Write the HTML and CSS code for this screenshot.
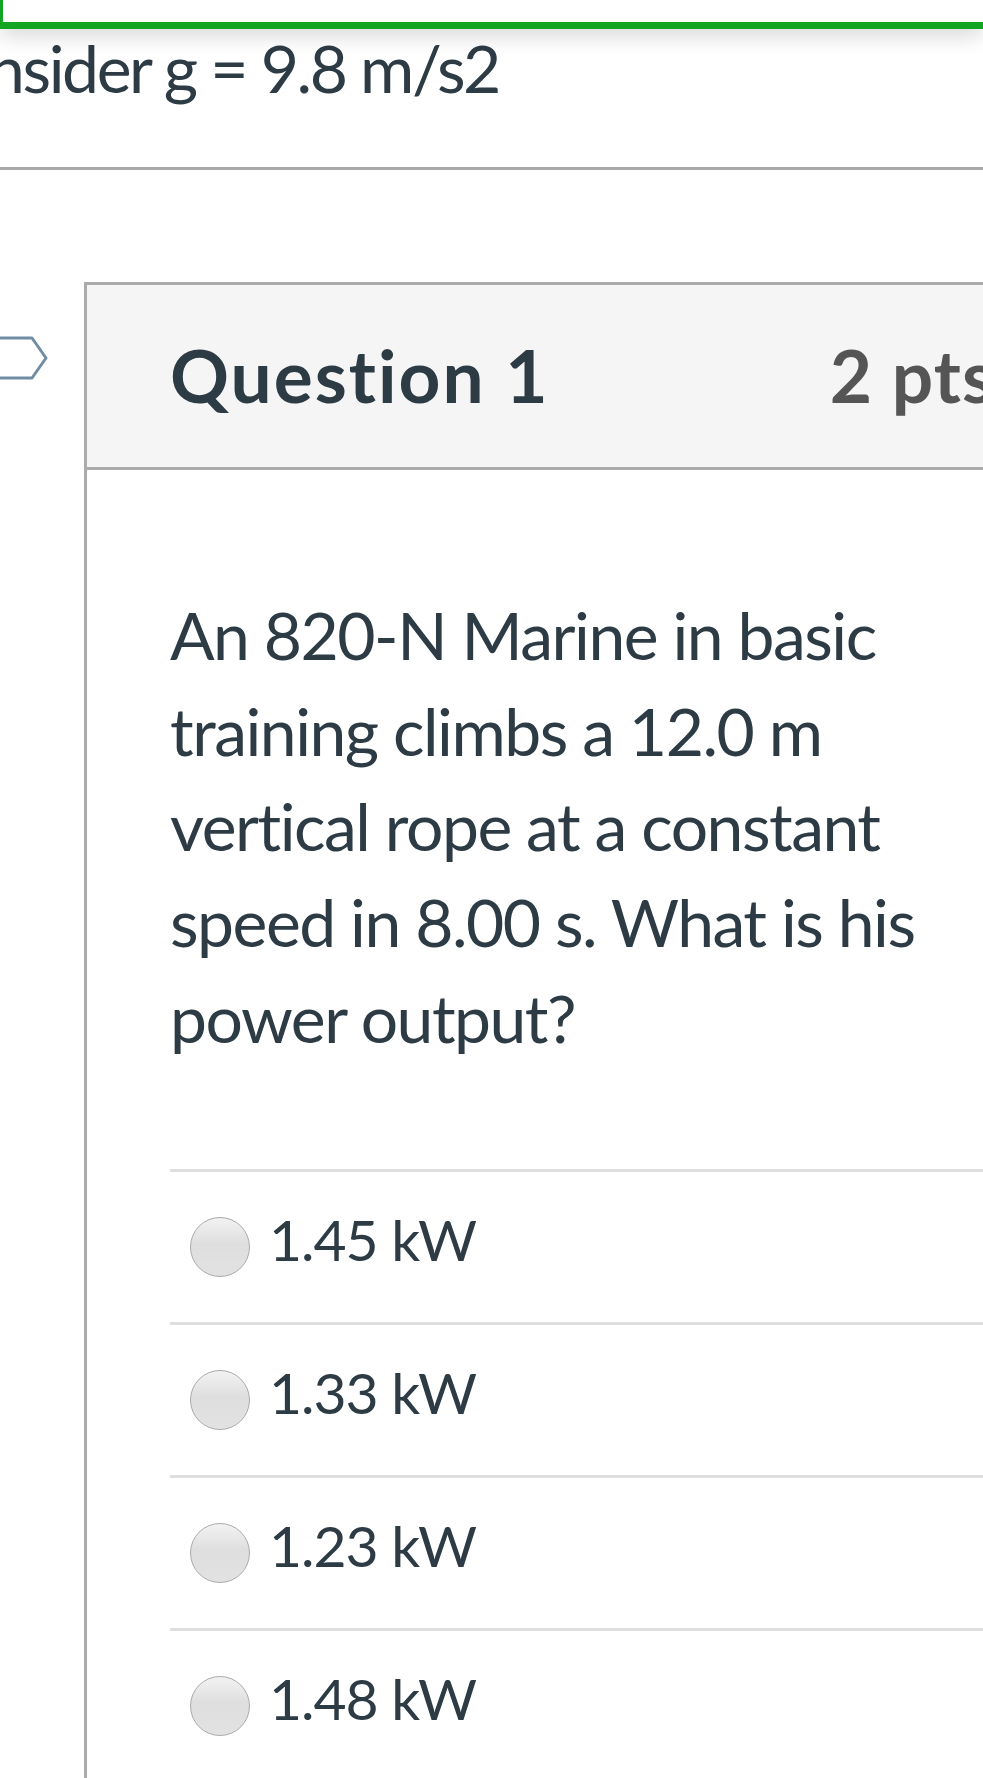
FILE: index.html
```html
<!DOCTYPE html>
<html lang="en">
<head>
<meta charset="utf-8">
<title>Quiz</title>
<link rel="stylesheet" href="styles.css">
</head>
<body>
<div class="page">
  <div class="top-box"></div>
  <p class="desc">Consider g = 9.8 m/s2</p>
  <div class="rule"></div>

  <div class="question-wrap">
    <svg class="flag" width="56" height="48" viewBox="0 0 56 48" aria-hidden="true">
      <path d="M-4 4 H32 L46 24 L32 44 H-4" fill="none" stroke="#6f8ea6" stroke-width="3" stroke-linejoin="round"/>
    </svg>
    <div class="question">
      <div class="q-header">
        <h2 class="q-title">Question 1</h2>
        <span class="q-pts">2 pts</span>
      </div>
      <div class="q-body">
        <p class="q-text">An 820-N Marine in basic training climbs a 12.0 m vertical rope at a constant speed in 8.00 s. What is his power output?</p>
        <div class="answers">
          <label class="answer"><span class="radio"></span><span class="answer-text">1.45 kW</span></label>
          <label class="answer"><span class="radio"></span><span class="answer-text">1.33 kW</span></label>
          <label class="answer"><span class="radio"></span><span class="answer-text">1.23 kW</span></label>
          <label class="answer"><span class="radio"></span><span class="answer-text">1.48 kW</span></label>
        </div>
      </div>
    </div>
  </div>
</div>
</body>
</html>
```

FILE: styles.css
```css
html, body {
  margin: 0;
  padding: 0;
  background: #ffffff;
  overflow: hidden;
}

body {
  font-family: Lato, "Open Sans", "Liberation Sans", sans-serif;
  color: #2d3b45;
}

.page {
  width: 983px;
  height: 1778px;
  overflow: hidden;
}

.top-box {
  height: 22px;
  border-left: 3px solid #12a523;
  border-bottom: 7px solid #12a523;
  background: #ffffff;
  box-shadow: 0 8px 20px rgba(0, 0, 0, 0.14);
  position: relative;
  z-index: 1;
}

.desc {
  margin: -1px 0 0 -88px;
  font-size: 66px;
  line-height: 1.2;
  font-weight: 400;
  letter-spacing: -2.4px;
  white-space: nowrap;
}

.rule {
  margin-top: 60px;
  height: 3px;
  background: #aaaaaa;
}

.question-wrap {
  position: relative;
  margin-top: 112px;
}

.flag {
  position: absolute;
  left: 0;
  top: 52px;
}

.question {
  margin-left: 84px;
  margin-right: -60px;
  border-left: 3px solid #ababab;
  border-top: 3px solid #ababab;
}

.q-header {
  height: 182px;
  background: #f5f5f5;
  border-bottom: 3px solid #ababab;
  display: flex;
  align-items: center;
  justify-content: space-between;
  padding: 0 48px 0 83px;
}

.q-title {
  margin: 0;
  font-size: 73px;
  font-weight: 700;
  line-height: 1.2;
  letter-spacing: 2px;
  color: #2d3b45;
}

.q-pts {
  font-size: 73px;
  font-weight: 700;
  line-height: 1.2;
  letter-spacing: 1px;
  color: #555555;
}

.q-body {
  padding: 117px 0 0 83px;
}

.q-text {
  margin: 0;
  width: 780px;
  font-size: 66px;
  line-height: 95.6px;
  letter-spacing: -1.5px;
}

.answers {
  margin-top: 104px;
}

.answer {
  display: flex;
  align-items: center;
  height: 150px;
  border-top: 3px solid #dfdfdf;
  padding-left: 20px;
}

.radio {
  width: 58px;
  height: 58px;
  border-radius: 50%;
  border: 1.5px solid #aaaaaa;
  background: linear-gradient(#f2f2f2, #dedede 45%, #e2e2e2);
  flex: none;
}

.answer-text {
  margin-left: 19px;
  margin-bottom: 16px;
  font-size: 57px;
  line-height: 1.2;
  letter-spacing: -1px;
  color: #2d3b45;
}
```
